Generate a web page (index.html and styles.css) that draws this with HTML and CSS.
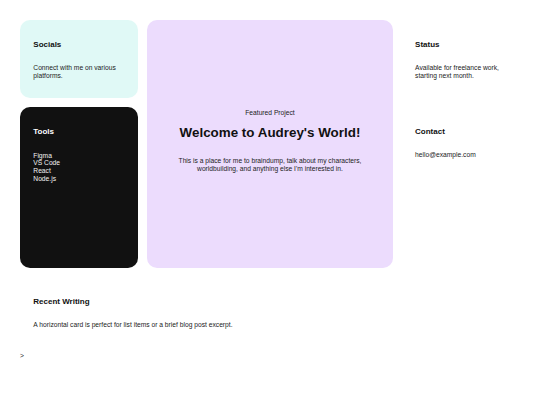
FILE: index.html
```html
<!DOCTYPE html>
<html lang="en">
<head>
<meta charset="utf-8">
<title>Audrey's World</title>
<link rel="stylesheet" href="styles.css">
</head>
<body>
<div class="grid">
  <section class="card socials">
    <h3 class="card-title">Socials</h3>
    <p class="card-text">Connect with me on various platforms.</p>
  </section>
  <section class="card featured">
    <p class="featured-label">Featured Project</p>
    <h1 class="featured-title">Welcome to Audrey's World!</h1>
    <p class="featured-text">This is a place for me to braindump, talk about my characters, worldbuilding, and anything else I'm interested in.</p>
  </section>
  <section class="card status">
    <h3 class="card-title">Status</h3>
    <p class="card-text">Available for freelance work, starting next month.</p>
  </section>
  <section class="card tools">
    <h3 class="card-title">Tools</h3>
    <ul class="tool-list">
      <li>Figma</li>
      <li>VS Code</li>
      <li>React</li>
      <li>Node.js</li>
    </ul>
  </section>
  <section class="card contact">
    <h3 class="card-title">Contact</h3>
    <p class="card-text">hello@example.com</p>
  </section>
  <section class="card writing">
    <h3 class="card-title">Recent Writing</h3>
    <p class="card-text">A horizontal card is perfect for list items or a brief blog post excerpt.</p>
  </section>
</div>
<div class="stray">&gt;</div>
</body>
</html>
```
FILE: styles.css
```css
html, body {
  margin: 0;
  padding: 0;
  background: #ffffff;
}

body {
  padding: 20px;
  font-family: "Liberation Sans", Arial, sans-serif;
  font-size: 6.7px;
  color: #222;
}

.grid {
  display: grid;
  grid-template-columns: repeat(4, 1fr);
  grid-template-rows: auto 161px auto;
  gap: 9px;
  width: 500px;
}

.card {
  border-radius: 10px;
  padding: 20.4px 13.3px 18.4px;
  box-sizing: border-box;
}

.card-title {
  margin: 0 0 14.6px;
  font-size: 8px;
  line-height: 9.2px;
  font-weight: bold;
  color: #111;
}

.card-text {
  margin: 0;
  line-height: 7.7px;
}

.socials {
  grid-column: 1;
  grid-row: 1;
  background: #e0f9f6;
}

.featured {
  grid-column: 2 / 4;
  grid-row: 1 / 3;
  background: #ecdcfd;
  display: flex;
  flex-direction: column;
  justify-content: center;
  align-items: center;
  text-align: center;
  padding: 20px 13.3px;
}

.featured-label {
  margin: 0;
  line-height: 7.7px;
  color: #222;
}

.featured-title {
  margin: 8.8px 0 16.5px;
  font-size: 13.4px;
  line-height: 15.4px;
  font-weight: bold;
  color: #111;
}

.featured-text {
  margin: 0 0 6.6px;
  line-height: 7.7px;
  max-width: 200px;
  color: #222;
}

.status {
  grid-column: 4;
  grid-row: 1;
}

.tools {
  grid-column: 1;
  grid-row: 2;
  background: #111111;
}

.tools .card-title {
  color: #ffffff;
  margin-bottom: 15px;
}

.tool-list {
  list-style: none;
  margin: 0;
  padding: 0;
  line-height: 7.7px;
  color: #f2f2f2;
}

.contact {
  grid-column: 4;
  grid-row: 2;
}

.writing {
  grid-column: 1 / 5;
  grid-row: 3;
}

.stray {
  margin-top: 5px;
  line-height: 7.7px;
  color: #222;
}
```
